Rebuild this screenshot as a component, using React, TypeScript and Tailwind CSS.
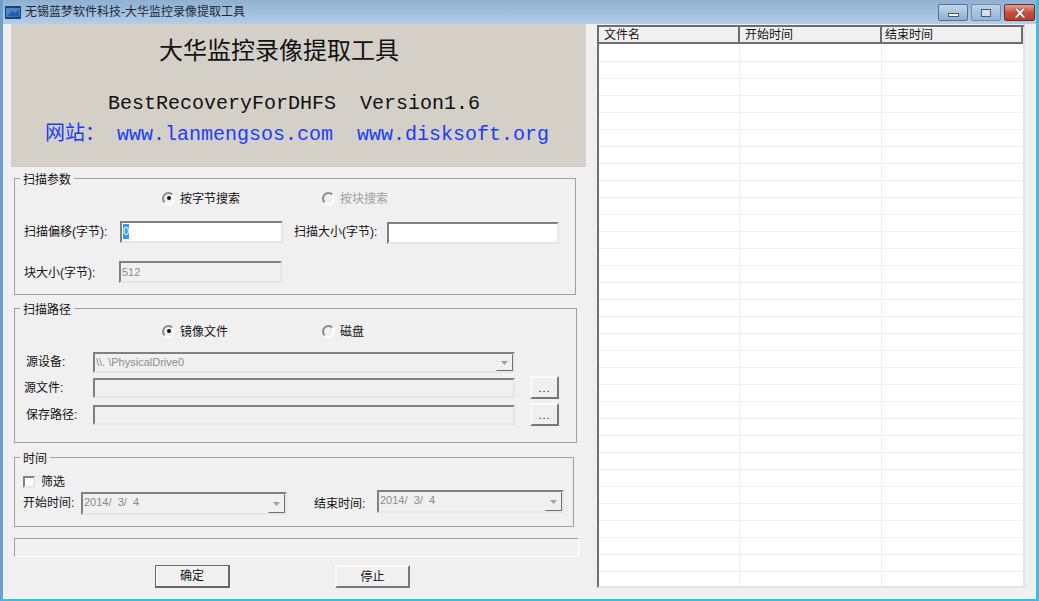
const uiFont = "font-['Liberation_Sans','Noto_Sans_CJK_SC',sans-serif] text-xs text-[#111]";
const sunken = "border-2 border-t-[#808080] border-l-[#808080] border-r-[#e6e6e6] border-b-[#e6e6e6]";

const rows = Array.from({ length: 32 }, (_, i) => i);

function Group({ title, className, children }: { title: string; className: string; children: React.ReactNode }) {
  return (
    <div className={`relative ml-[11px] border border-[#a0a0a0] ${className}`}>
      <span className="absolute left-[5px] top-[-6px] bg-[#f0f0f0] px-[3px] leading-[14px]">{title}</span>
      {children}
    </div>
  );
}

function Radio({ label, checked, disabled, className }: { label: string; checked?: boolean; disabled?: boolean; className: string }) {
  return (
    <div className={`flex items-center gap-[5px] ${disabled ? "text-[#a0a0a0]" : ""} ${className}`}>
      <span className="flex h-[13px] w-[13px] items-center justify-center rounded-full border-2 border-t-[#8a8a8a] border-l-[#8a8a8a] border-r-[#fff] border-b-[#fff] bg-[#f0f0f0]">
        {checked && <span className="h-[4px] w-[4px] rounded-full bg-[#111]" />}
      </span>
      <span className="pt-[2px]">{label}</span>
    </div>
  );
}

function ArrowButton({ className }: { className: string }) {
  return (
    <span className={`flex items-center justify-center border border-t-[#f0f0f0] border-l-[#f0f0f0] border-r-[#707070] border-b-[#707070] bg-[#f0f0f0] ${className}`}>
      <svg width="7" height="4" viewBox="0 0 7 4">
        <path d="M0 0h7L3.500 4z" fill="#a0a0a0" />
      </svg>
    </span>
  );
}

function Combo({ value, className }: { value: string; className: string }) {
  return (
    <div className={`flex items-start justify-between bg-[#f0f0f0] ${sunken} ${className}`}>
      <span className="pl-[1px] text-[11px] leading-[17px] whitespace-pre text-[#8c8c8c]">{value}</span>
      <ArrowButton className="h-full w-[17px]" />
    </div>
  );
}

function DotsButton({ className }: { className: string }) {
  return (
    <button className={`flex h-[23px] w-[29px] items-center justify-center border-2 border-t-[#fafafa] border-l-[#fafafa] border-r-[#777] border-b-[#777] bg-[#f0f0f0] ${className}`}>
      <span className="mt-[1px] text-[11px] leading-none tracking-[1px]">...</span>
    </button>
  );
}

function ActionButton({ label, isDefault, className }: { label: string; isDefault?: boolean; className: string }) {
  return (
    <button
      className={`h-[23px] w-[75px] bg-[#f0f0f0] text-xs ${
        isDefault
          ? "border border-r-2 border-b-2 border-[#666] shadow-[inset_1px_1px_0_#fafafa]"
          : "border-2 border-t-[#fafafa] border-l-[#fafafa] border-r-[#777] border-b-[#777]"
      } ${className}`}
    >
      {label}
    </button>
  );
}

function WindowControls() {
  return (
    <div className="mt-[4px] mr-[4px] flex h-[17px] gap-[3px]">
      <div className="flex w-[30px] items-end justify-center rounded-[2px] border border-[#56708f] bg-gradient-to-b from-[#c4d7ea] to-[#8fadcc] pb-[3px]">
        <span className="h-[4px] w-[11px] border border-[#44566c] bg-white" />
      </div>
      <div className="flex w-[30px] items-center justify-center rounded-[2px] border border-[#6f8cab] bg-gradient-to-b from-[#bdd2e8] to-[#96b4d2]">
        <span className="h-[8px] w-[10px] border border-[#4c5d72] bg-[#d4e0ec]" />
      </div>
      <div className="flex w-[31px] items-center justify-center rounded-[2px] border border-[#6e2a24] bg-gradient-to-b from-[#e2a198] via-[#c8503f] to-[#b8392b]">
        <svg width="14" height="10" viewBox="0 0 14 10">
          <path d="M1 0h3.200L7 3l2.800-3H13L8.800 5 13 10H9.800L7 7l-2.800 3H1l4.200-5z" fill="#f2f2f2" stroke="#5c2a25" strokeWidth="0.6" />
        </svg>
      </div>
    </div>
  );
}

export default function App() {
  return (
    <div className={`flex h-[601px] w-[1039px] flex-col overflow-hidden border-x-[3px] border-b-[2px] border-l-[#6f9fd0] border-r-[#2cc4ec] border-b-[#2cc4ec] bg-[#f0f0f0] ${uiFont}`}>
      {/* title bar */}
      <div className="-mx-[3px] flex h-[24px] shrink-0 items-start justify-between bg-gradient-to-b from-[#8fb0d0] to-[#b4cde8]">
        <div className="flex h-[24px] items-center pl-[5px]">
          <svg width="16" height="13" viewBox="0 0 16 13">
            <rect width="16" height="13" rx="1" fill="#1c3f7c" />
            <rect x="1" y="2" width="14" height="9" fill="#4a86c8" />
            <path d="M2 10l5-5 3 2 4-4v8z" fill="#2a5fa4" />
          </svg>
          <span className="ml-[4px] text-[#1b2a38]">无锡蓝梦软件科技-大华监控录像提取工具</span>
        </div>
        <WindowControls />
      </div>

      <div className="flex min-h-0 flex-1">
        {/* left side */}
        <div className="w-[594px] shrink-0">
          <div className="ml-[8px] flex h-[143px] w-[575px] flex-col bg-[#d4d0c8]">
            <div className="mt-[11px] pl-[148px] text-2xl leading-[32px] text-[#111]">大华监控录像提取工具</div>
            <div className="mt-[23px] w-full pl-[97px] font-['Liberation_Mono','Noto_Sans_CJK_SC',monospace] text-[20px] leading-[28px] whitespace-pre text-[#111]">
              BestRecoveryForDHFS  Version1.6
            </div>
            <div className="mt-[0px] w-full pl-[34px] font-['Liberation_Mono','Noto_Sans_CJK_SC',monospace] text-[20px] leading-[34px] whitespace-pre text-[#1a3cff]">
              网站： www.lanmengsos.com  www.disksoft.org
            </div>
          </div>

          <Group title="扫描参数" className="mt-[11px] h-[117px] w-[562px]">
            <div className="mt-[12px] flex h-[14px]">
              <Radio label="按字节搜索" checked className="ml-[147px]" />
              <Radio label="按块搜索" disabled className="ml-[82px]" />
            </div>
            <div className="mt-[16px] flex h-[23px] items-center">
              <span className="ml-[9px] w-[96px] pb-[2px]">扫描偏移(字节):</span>
              <div className={`-mt-[2px] h-[22px] w-[163px] bg-white ${sunken}`}>
                <span className="ml-[1px] inline-block bg-[#3399ff] text-[11px] leading-[15px] text-white">0</span>
              </div>
              <span className="ml-[11px] w-[93px] pb-[1px]">扫描大小(字节):</span>
              <div className={`h-[22px] w-[172px] bg-white ${sunken}`} />
            </div>
            <div className="mt-[16px] flex h-[23px] items-center">
              <span className="ml-[9px] w-[95px] pt-[2px]">块大小(字节):</span>
              <div className={`h-[22px] w-[163px] pl-[1px] text-[11px] leading-[18px] text-[#8c8c8c] ${sunken}`}>512</div>
            </div>
          </Group>

          <Group title="扫描路径" className="mt-[13px] h-[135px] w-[563px]">
            <div className="mt-[15px] flex h-[14px]">
              <Radio label="镜像文件" checked className="ml-[147px]" />
              <Radio label="磁盘" className="ml-[94px]" />
            </div>
            <div className="mt-[14px] flex h-[21px] items-center">
              <span className="ml-[11px] w-[67px] pb-[2px]">源设备:</span>
              <Combo value="\\. \PhysicalDrive0" className="h-[21px] w-[422px]" />
            </div>
            <div className="mt-[2px] flex h-[25px] items-center">
              <span className="ml-[9px] w-[69px]">源文件:</span>
              <div className={`h-[20px] w-[422px] ${sunken}`} />
              <DotsButton className="ml-[15px]" />
            </div>
            <div className="mt-[2px] flex h-[25px] items-center">
              <span className="ml-[11px] w-[67px]">保存路径:</span>
              <div className={`h-[20px] w-[422px] ${sunken}`} />
              <DotsButton className="ml-[15px]" />
            </div>
          </Group>

          <Group title="时间" className="mt-[14px] h-[70px] w-[560px]">
            <div className="mt-[17px] ml-[8px] flex h-[14px] items-center gap-[6px]">
              <span className="h-[12px] w-[12px] border-2 border-t-[#808080] border-l-[#808080] border-r-[#e6e6e6] border-b-[#e6e6e6] bg-white" />
              <span>筛选</span>
            </div>
            <div className="flex h-[25px] items-start">
              <span className="mt-[6px] ml-[8px] w-[58px]">开始时间:</span>
              <Combo value="2014/  3/  4" className="mt-[3px] h-[23px] w-[206px]" />
              <span className="mt-[7px] ml-[27px] w-[63px]">结束时间:</span>
              <Combo value="2014/  3/  4" className="mt-[1px] h-[23px] w-[187px]" />
            </div>
          </Group>

          <div className="mt-[11px] ml-[11px] h-[19px] w-[565px] border border-t-[#a0a0a0] border-l-[#a0a0a0] border-r-[#fff] border-b-[#fff]" />

          <div className="mt-[8px] flex">
            <ActionButton label="确定" isDefault className="ml-[152px]" />
            <ActionButton label="停止" className="ml-[105px]" />
          </div>
        </div>

        {/* file list */}
        <div className="mt-[1px] mb-[11px] flex w-[428px] shrink-0 flex-col border-t-2 border-l-2 border-[#6e6e6e] border-r-2 border-r-[#e4e4e4] border-b-2 border-b-[#e4e4e4] bg-white">
          <div className="flex h-[17px] shrink-0 border-b-2 border-[#6e6e6e] bg-[#f0f0f0]">
            <div className="w-[141px] border-r-2 border-[#6e6e6e] pl-[5px] leading-[16px]">文件名</div>
            <div className="w-[142px] border-r-2 border-[#6e6e6e] pl-[5px] leading-[16px]">开始时间</div>
            <div className="flex-1 border-r-2 border-[#6e6e6e] pl-[3px] leading-[16px]">结束时间</div>
          </div>
          <div className="min-h-0 flex-1 overflow-hidden pt-[1px]">
            {rows.map((row) => (
              <div key={row} className="flex h-[17px] border-b border-[#f0f0f0]">
                <div className="w-[141px] border-r border-[#f0f0f0]" />
                <div className="w-[142px] border-r border-[#f0f0f0]" />
              </div>
            ))}
          </div>
        </div>
      </div>
    </div>
  );
}
